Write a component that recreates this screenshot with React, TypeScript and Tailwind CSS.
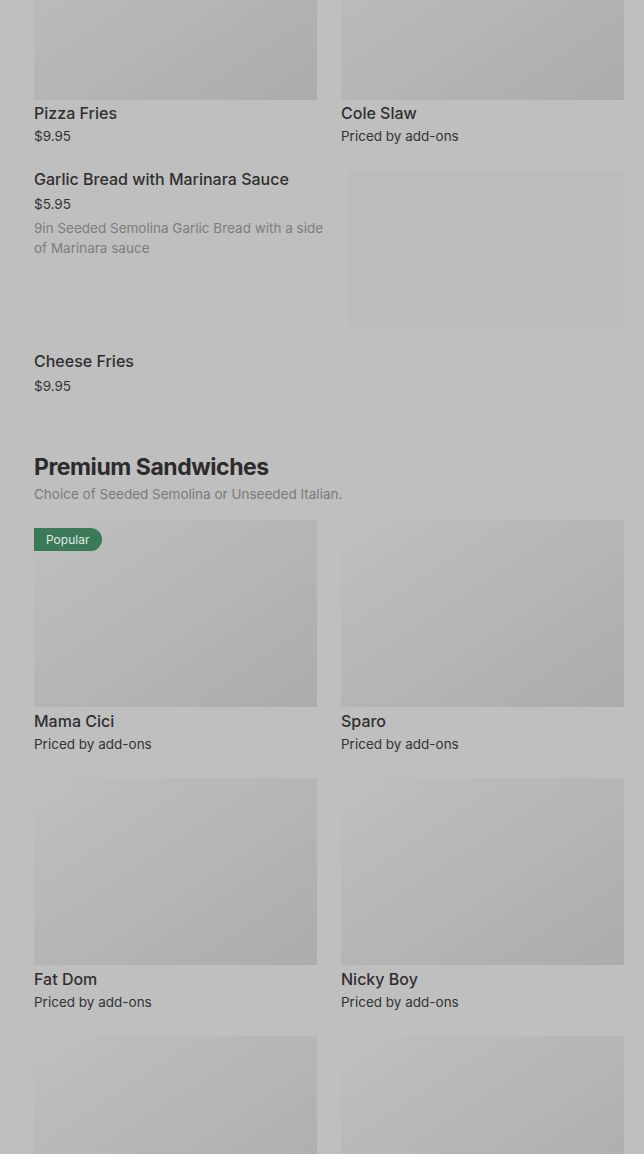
import React from 'react';

type Item = { name: string; price?: string; popular?: boolean };

const topItems: Item[] = [
  { name: 'Pizza Fries', price: '$9.95' },
  { name: 'Cole Slaw', price: 'Priced by add-ons' },
];

const sandwiches: Item[] = [
  { name: 'Mama Cici', price: 'Priced by add-ons', popular: true },
  { name: 'Sparo', price: 'Priced by add-ons' },
  { name: 'Fat Dom', price: 'Priced by add-ons' },
  { name: 'Nicky Boy', price: 'Priced by add-ons' },
];

const Card: React.FC<{ item: Item; roomy?: boolean }> = ({ item, roomy }) => (
  <div className="flex flex-col">
    <div className="relative h-[187px] bg-gradient-to-br from-[#bfbfbf] to-[#acacac]">
      {item.popular && (
        <span className="absolute left-0 top-2 rounded-r-full bg-[#3b7a58] pl-3 pr-[13px] text-[12px] leading-[23px] text-[#e2e9e5]">
          Popular
        </span>
      )}
    </div>
    <p className={roomy ? 'mt-0.5 text-[16px] font-medium leading-6 text-[#2f2f2f]' : 'mt-px text-[16px] font-medium leading-6 text-[#2f2f2f]'}>
      {item.name}
    </p>
    <p className="mt-px text-[13.5px] leading-5 text-[#333333]">{item.price}</p>
  </div>
);

const App: React.FC = () => {
  return (
    <div className="h-[1154px] overflow-hidden bg-[#bfbfbf] font-['Inter',sans-serif]">
      <div className="-mt-[87px] pl-[34px] pr-[20px]">
        <div className="grid grid-cols-2 gap-x-6">
          {topItems.map((it) => (
            <Card key={it.name} item={it} />
          ))}
        </div>

        {/* list row with side picture */}
        <div className="mt-[21px] flex gap-6">
          <div className="flex-1">
            <p className="text-[16px] font-medium leading-6 text-[#2f2f2f]">Garlic Bread with Marinara Sauce</p>
            <p className="mt-[3px] text-[13.5px] leading-5 text-[#333333]">$5.95</p>
            <p className="mt-1 text-[13.5px] leading-5 text-[#7d7d7d]">
              9in Seeded Semolina Garlic Bread with a side of Marinara sauce
            </p>
          </div>
          <div className="mt-1 h-[156px] w-[275px] shrink-0 rounded-sm border border-[#bababa] bg-[#bcbcbc]" />
        </div>

        <div className="mt-[22px]">
          <p className="text-[16px] font-medium leading-6 text-[#2f2f2f]">Cheese Fries</p>
          <p className="mt-[3px] text-[13.5px] leading-5 text-[#333333]">$9.95</p>
        </div>

        <h2 className="mt-[55px] text-[23px] font-bold leading-8 tracking-[-0.45px] text-[#2c2c2c]">
          Premium Sandwiches
        </h2>
        <p className="mt-[1px] text-[13.5px] leading-5 text-[#7a7a7a]">Choice of Seeded Semolina or Unseeded Italian.</p>

        <div className="mt-4 grid grid-cols-2 gap-x-6 gap-y-6">
          {sandwiches.map((it) => (
            <Card key={it.name} item={it} roomy />
          ))}
          <div className="h-[187px] bg-gradient-to-br from-[#bfbfbf] to-[#acacac]" />
          <div className="h-[187px] bg-gradient-to-br from-[#bfbfbf] to-[#acacac]" />
        </div>
      </div>
    </div>
  );
};

export default App;
